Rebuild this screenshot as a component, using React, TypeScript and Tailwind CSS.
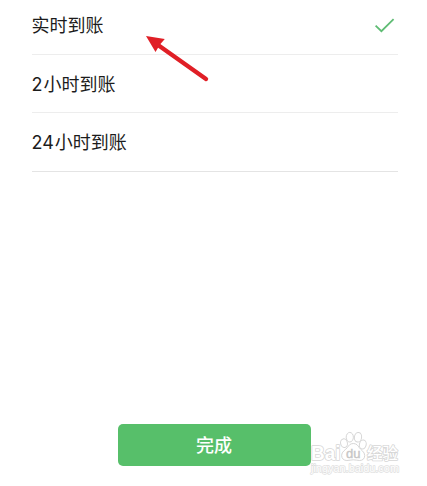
const OPTIONS = [
  { hours: "", label: "实时到账", row: "h-[55px] pb-0.5", border: "border-[#ededed]" },
  { hours: "2", label: "小时到账", row: "h-[58px] pt-0.5", border: "border-[#ededed]" },
  { hours: "24", label: "小时到账", row: "h-[59px] pt-0.5", border: "border-[#e4e4e4]" },
];

function CheckIcon() {
  return (
    <svg width="21" height="16" viewBox="0 0 21 16" fill="none" className="mb-px mr-[3px]">
      <path d="M1.6 7.6 7.4 13.2 19.6 1.2" stroke="#5fbc74" strokeWidth="1.8" />
    </svg>
  );
}

function Pointer() {
  return (
    <svg width="64" height="48" viewBox="0 0 64 48" className="absolute left-[146px] top-[35px]">
      <path d="M12 10 60 44" stroke="#e01f26" strokeWidth="4.4" strokeLinecap="round" />
      <path d="M0 1 18.8 4 14 9.5 9.5 17Z" fill="#e01f26" />
    </svg>
  );
}

function Watermark() {
  return (
    <svg
      width="100"
      height="50"
      viewBox="0 0 100 50"
      className="absolute left-[307px] top-[428px]"
      stroke="#d6d6d6"
      strokeWidth="1"
      fill="#fff"
      fontFamily="'Liberation Sans', 'Noto Sans CJK SC', sans-serif"
    >
      <g paintOrder="stroke" strokeWidth="1.6" strokeLinejoin="round">
        <text x="4" y="32" fontSize="20" fontWeight="700" textLength="29.5" lengthAdjust="spacingAndGlyphs">Bai</text>
        <text x="60" y="31" fontSize="15.5" fontWeight="500" textLength="31" fontFamily="'Noto Sans CJK SC', sans-serif">经验</text>
        <text x="4" y="43.5" fontSize="10" strokeWidth="1.3" stroke="#dedede" textLength="88" lengthAdjust="spacingAndGlyphs">
          jingyan.baidu.com
        </text>
      </g>
      <ellipse cx="37" cy="15.2" rx="3.4" ry="4.4" transform="rotate(-12 37 15.2)" />
      <ellipse cx="42.8" cy="9.2" rx="3.6" ry="4.8" />
      <ellipse cx="51" cy="9.2" rx="3.6" ry="4.8" transform="rotate(8 51 9.2)" />
      <ellipse cx="55.8" cy="16.5" rx="3.4" ry="4.5" transform="rotate(12 55.8 16.5)" />
      <path d="M46.3 15.5c3 0 4.8 2 6 4.2 1.7 2.5 5.4 4 5.4 7.8 0 3.3-2.2 5-5 5-2 0-4.3-.7-6.4-.7s-4.3.7-6.4.7c-3 0-5.3-1.8-5.3-5.2 0-3.7 3.9-5.2 5.7-7.7 1.4-2.2 3-4.1 6-4.1Z" />
      <text x="39" y="30" fontSize="13" fill="#c6c6c6" stroke="#c6c6c6" strokeWidth="0.4" textLength="14.5" lengthAdjust="spacingAndGlyphs">du</text>
    </svg>
  );
}

export default function App() {
  return (
    <main className="relative flex h-[486px] w-[427px] flex-col items-center justify-between overflow-hidden bg-white pb-5 font-['Inter','Noto_Sans_CJK_SC',sans-serif]">
      <ul className="w-full pl-8 pr-[29px]">
        {OPTIONS.map((option, index) => (
          <li
            key={option.hours + option.label}
            className={`flex items-center justify-between border-b text-[18px] leading-6 text-[#1c1c1c] ${option.row} ${option.border}`}
          >
            <span className="-ml-[0.5px]">
              {option.hours && <span className="mr-px">{option.hours}</span>}
              {option.label}
            </span>
            {index === 0 && <CheckIcon />}
          </li>
        ))}
      </ul>
      <button className="mr-[-2px] h-[42px] w-[193px] rounded-[5px] bg-[#57bf6a] pr-px pt-0.5 text-[18px] font-medium leading-6 text-white">
        完成
      </button>
      <Pointer />
      <Watermark />
    </main>
  );
}
